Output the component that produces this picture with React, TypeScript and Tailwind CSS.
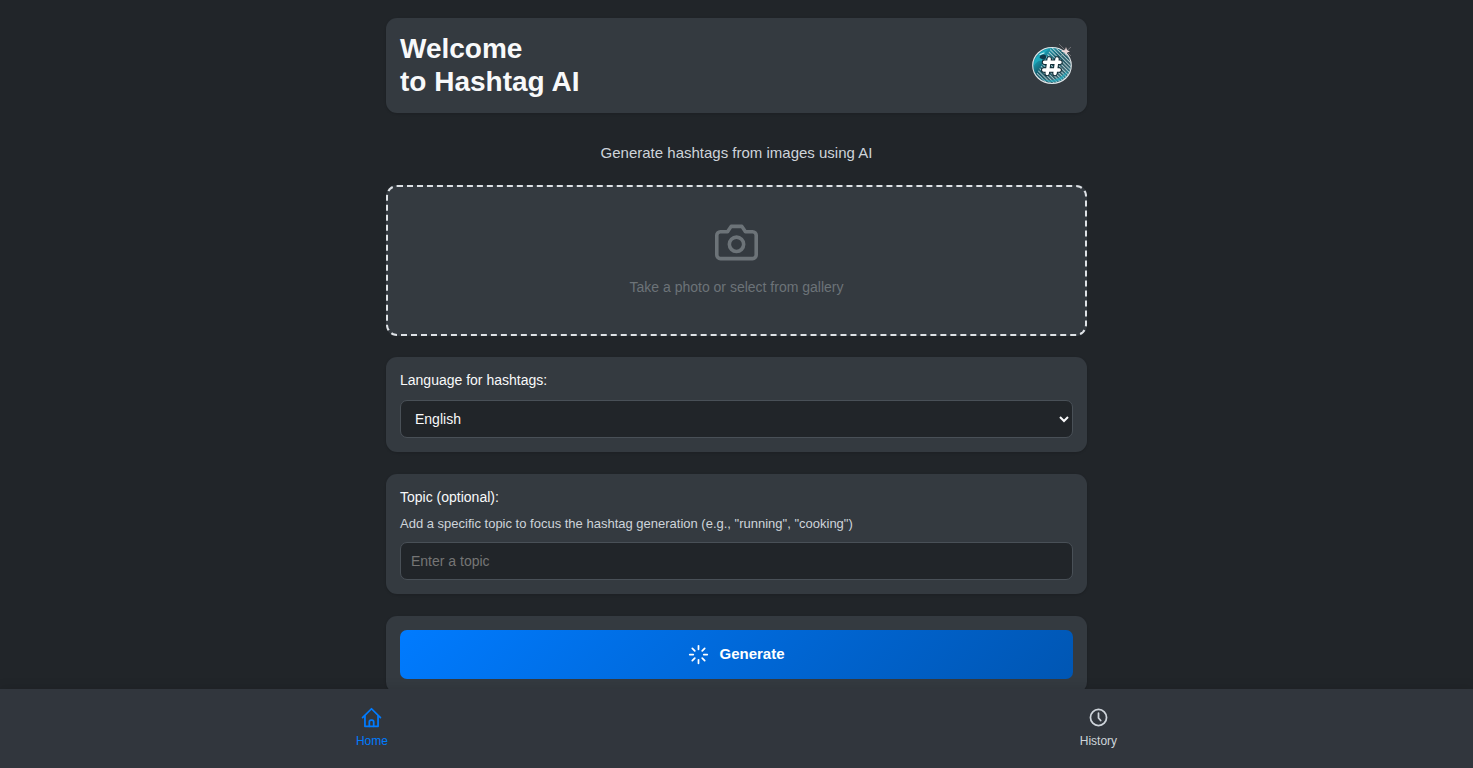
import { useState } from "react";
import { FiCamera, FiLoader } from "react-icons/fi";

const languages = ["English", "Spanish", "French", "German", "Italian", "Portuguese"];

const card = "rounded-[11px] bg-[#343a40] p-3.5 shadow";
const field =
  "block h-[38px] w-full rounded-[7px] border border-[#495057] bg-[#212529] text-sm text-[#f8f9fa] placeholder:text-[#757575]";

function Logo() {
  return (
    <svg viewBox="0 0 64 60" className="h-[60px] w-16" role="img" aria-label="Hashtag AI">
      <defs>
        <linearGradient id="globe" x1="0" y1="0" x2="1" y2="1">
          <stop offset="0" stopColor="#12353f" />
          <stop offset="0.2" stopColor="#1ba0b5" />
          <stop offset="0.45" stopColor="#125464" />
          <stop offset="0.7" stopColor="#2f5a66" />
          <stop offset="1" stopColor="#1994a8" />
        </linearGradient>
        <pattern id="lines" width="2.6" height="2.6" patternUnits="userSpaceOnUse" patternTransform="rotate(45)">
          <path d="M0 1.3H2.6" stroke="#e0eef0" strokeWidth="1" />
        </pattern>
      </defs>
      <ellipse cx="32" cy="29.5" rx="19.3" ry="18" fill="url(#globe)" />
      <path d="M31 12c11 0 20 8 20 18-1 10-9 17-19 17-7 0-13-3-16-8z" fill="url(#lines)" opacity="0.75" />
      <path d="M14 30c0-9 6-15 15-17-5 3-7 7-7 12-3-1-6 1-8 5z" fill="#21b2c5" opacity="0.7" />
      <path d="M19 40c3 4 8 6 13 6 8 0 14-5 16-12-4 5-9 9-16 10-6 1-10-1-13-4z" fill="#20a9be" opacity="0.7" />
      <path d="M20 20c2-2 5-2 6 0s-2 4-4 3-3-1-2-3z" fill="#10394a" />
      <path d="M20 18.5l4-1.5" stroke="#c7f3f6" strokeWidth="1.2" strokeLinecap="round" />
      <ellipse cx="32" cy="29.5" rx="19.3" ry="18" fill="none" stroke="#dfe5e8" strokeWidth="1.1" />
      <g fill="none" strokeLinecap="round">
        <path d="M29.2 23l-2 14.5M37 23l-2 14.5M24.5 26.2h15.5M23.7 34h15.5" stroke="#102b35" strokeWidth="5.4" />
        <path d="M29.2 23l-2 14.5M37 23l-2 14.5M24.5 26.2h15.5M23.7 34h15.5" stroke="#fff" strokeWidth="3.4" />
      </g>
      <path d="M46 11l1 3 3 1.5-3 1-1 3-1-3-4-1 4-1.5z" fill="#f5dddd" />
      <path d="M39 8l12 12M51 11l-10 9" stroke="#c7bfc2" strokeWidth="0.4" />
    </svg>
  );
}

function HomeIcon() {
  return (
    <svg
      viewBox="0 0 24 24"
      className="size-[21px]"
      fill="none"
      stroke="currentColor"
      strokeWidth="2"
      strokeLinecap="round"
      strokeLinejoin="round"
      aria-hidden="true"
    >
      <path d="M1.8 12.2 12 2l10.2 10.2" />
      <path d="M4.5 10v12h15V10" />
      <path d="M9.5 22v-5a2 2 0 0 1 2-2h1a2 2 0 0 1 2 2v5" />
    </svg>
  );
}

function ClockIcon() {
  return (
    <svg
      viewBox="0 0 24 24"
      className="size-[21px]"
      fill="none"
      stroke="currentColor"
      strokeWidth="2"
      strokeLinecap="round"
      strokeLinejoin="round"
      aria-hidden="true"
    >
      <circle cx="12" cy="12" r="9.2" />
      <path d="M12 7v5.5l2.5 3" />
    </svg>
  );
}

export default function App() {
  const [language, setLanguage] = useState("English");
  const [topic, setTopic] = useState("");

  return (
    <div className="flex h-screen flex-col bg-[#212529] font-['Liberation_Sans',Arial,sans-serif] text-[#f8f9fa]">
      <main className="min-h-0 flex-1 overflow-y-auto [scrollbar-width:none]">
        <div className="mx-auto flex max-w-[701px] flex-col pt-[18px]">
          <header className={`${card} flex min-h-[95px] items-center justify-between`}>
            <h1 className="self-start text-[28px] leading-[33px] font-bold">
              Welcome
              <br />
              to Hashtag AI
            </h1>
            <div className="-my-1 -mr-[11px]">
              <Logo />
            </div>
          </header>

          <p className="mt-7 mb-5 text-center text-[15px] leading-6 text-[#ced4da]">
            Generate hashtags from images using AI
          </p>

          <button
            type="button"
            className="flex h-[151px] w-full flex-col items-center justify-center gap-3.5 rounded-[11px] border-2 border-dashed border-[#dee2e6] bg-[#343a40] pb-1 text-sm leading-[18px] text-[#6c7378]"
          >
            <FiCamera size={43} />
            <span>Take a photo or select from gallery</span>
          </button>

          <div className="mt-[21px] flex flex-col gap-[22px]">
            <section className={card}>
              <label htmlFor="language" className="mb-[11px] block text-sm leading-[18px]">
                Language for hashtags:
              </label>
              <select
                id="language"
                value={language}
                onChange={(e) => setLanguage(e.target.value)}
                className={`${field} pl-2.5`}
              >
                {languages.map((name) => (
                  <option key={name}>{name}</option>
                ))}
              </select>
            </section>

            <section className={card}>
              <label htmlFor="topic" className="block text-sm leading-[18px]">
                Topic (optional):
              </label>
              <p id="topic-hint" className="my-[9px] text-[13px] leading-[18px] text-[#ced4da]">
                Add a specific topic to focus the hashtag generation (e.g., "running", "cooking")
              </p>
              <input
                id="topic"
                type="text"
                aria-describedby="topic-hint"
                placeholder="Enter a topic"
                value={topic}
                onChange={(e) => setTopic(e.target.value)}
                className={`${field} px-2.5`}
              />
            </section>

            <section className={card}>
              <button
                type="button"
                className="flex h-[49px] w-full items-center justify-center gap-2.5 rounded-[7px] bg-linear-135 from-[#007bff] to-[#0056b3] text-[15px] font-bold text-white"
              >
                <FiLoader size={21} />
                Generate
              </button>
            </section>
          </div>
        </div>
      </main>

      <nav className="z-10 flex h-[79px] shrink-0 items-center justify-around bg-[#31363d] px-2.5 pb-0.5 text-xs shadow-[0_-2px_10px_rgba(0,0,0,0.1)]">
        <a href="#home" className="flex flex-col items-center gap-[5px] text-[#007bff]">
          <HomeIcon />
          Home
        </a>
        <a href="#history" className="flex flex-col items-center gap-[5px] text-[#ced4da]">
          <ClockIcon />
          History
        </a>
      </nav>
    </div>
  );
}
